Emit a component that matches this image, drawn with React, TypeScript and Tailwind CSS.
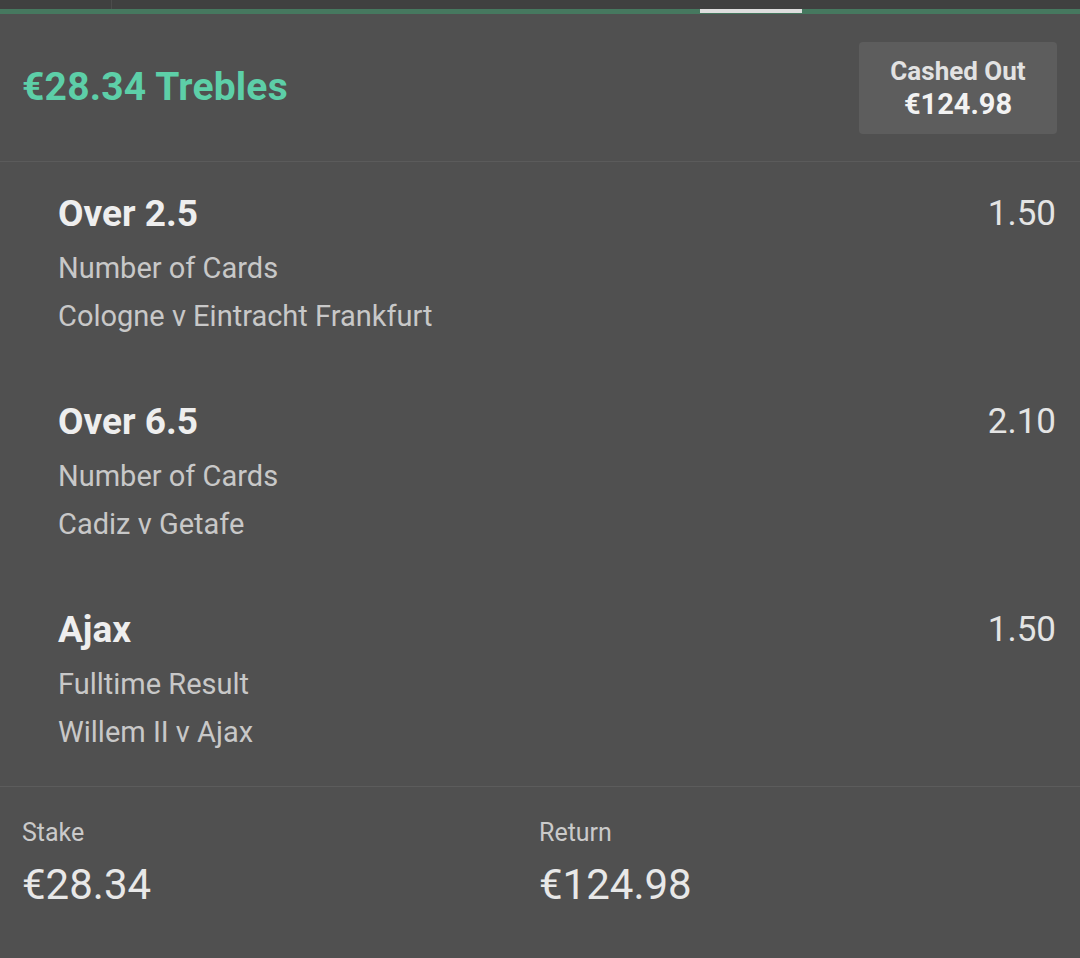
const selections = [
  { name: "Over 2.5", market: "Number of Cards", event: "Cologne v Eintracht Frankfurt", odds: "1.50" },
  { name: "Over 6.5", market: "Number of Cards", event: "Cadiz v Getafe", odds: "2.10" },
  { name: "Ajax", market: "Fulltime Result", event: "Willem II v Ajax", odds: "1.50" },
];

export default function App() {
  return (
    <div
      className="w-[1080px] h-[958px] bg-[#505050] overflow-hidden flex flex-col"
      style={{ fontFamily: "Roboto, 'Liberation Sans', sans-serif" }}
    >
      {/* tab strip */}
      <div className="h-[9px] bg-[#404040] flex">
        <div className="w-[112px] border-r border-[#4c4c4c]" />
      </div>
      <div className="h-[5px] bg-[#46785f] flex">
        <div className="w-[700px]" />
        <div className="w-[102px] h-[4px] bg-[#dedede]" />
      </div>

      {/* header */}
      <div className="h-[148px] flex items-center justify-between pl-[22px] pr-[23px] border-b border-[#5b5b5b]">
        <div className="text-[39px] tracking-[0.2px] font-bold text-[#5dcfa8]">€28.34 Trebles</div>
        <div className="w-[198px] h-[92px] rounded bg-[#5d5d5d] flex flex-col items-center justify-center">
          <div className="text-[26px] leading-[32px] font-bold text-[#e2e2e2]">Cashed Out</div>
          <div className="text-[29px] leading-[34px] font-bold text-[#f2f2f2]">€124.98</div>
        </div>
      </div>

      {/* legs */}
      <div className="flex flex-col gap-[60px] pt-[30px] pb-[30px] pl-[58px] pr-[24px] border-b border-[#5c5c5c]">
        {selections.map((s) => (
          <div key={s.name} className="flex justify-between">
            <div className="flex flex-col">
              <div className="text-[37px] leading-[44px] font-bold text-[#eeeeee]">{s.name}</div>
              <div className="mt-2 text-[29px] leading-[48px] text-[#c8c8c8]">{s.market}</div>
              <div className="text-[29px] leading-[48px] text-[#c8c8c8]">{s.event}</div>
            </div>
            <div className="text-[35px] leading-[44px] text-[#e4e4e4]">{s.odds}</div>
          </div>
        ))}
      </div>

      {/* stake / return */}
      <div className="flex pt-[30px] pl-[22px]">
        <div className="w-[517px] flex flex-col">
          <div className="text-[25px] leading-[32px] text-[#cacaca]">Stake</div>
          <div className="mt-3 text-[42px] leading-[48px] text-[#e8e8e8]">€28.34</div>
        </div>
        <div className="flex flex-col">
          <div className="text-[25px] leading-[32px] text-[#cacaca]">Return</div>
          <div className="mt-3 text-[42px] leading-[48px] text-[#e8e8e8]">€124.98</div>
        </div>
      </div>
    </div>
  );
}
